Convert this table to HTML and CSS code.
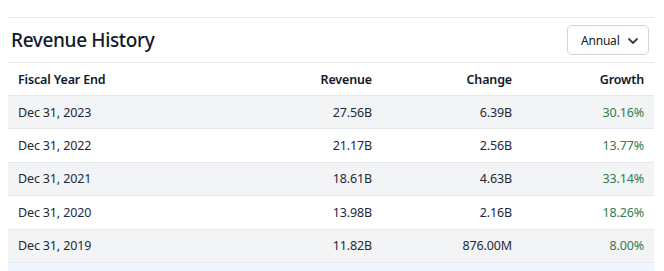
FILE: index.html
```html
<!DOCTYPE html>
<html lang="en">
<head>
    <meta charset="UTF-8">
    <meta name="viewport" content="width=device-width, initial-scale=1.0">
    <title>Revenue History</title>
    <link rel="stylesheet" href="styles.css">
</head>
<body>
<div class="panel">
    <!-- Header -->
    <div class="panel-head">
        <h2 class="title">Revenue History</h2>
        <button class="period-btn">
            <span>Annual</span>
            <svg class="chevron" width="10" height="6" viewBox="0 0 10 6">
                <path d="M1 1l4 4 4-4" fill="none" stroke="#374151" stroke-width="1.8" stroke-linecap="round" stroke-linejoin="round"/>
            </svg>
        </button>
    </div>

    <!-- Table -->
    <div class="table">
        <div class="row head">
            <div class="cell">Fiscal Year End</div>
            <div class="cell num">Revenue</div>
            <div class="cell num">Change</div>
            <div class="cell num">Growth</div>
        </div>
        <div class="row alt">
            <div class="cell">Dec 31, 2023</div>
            <div class="cell num">27.56B</div>
            <div class="cell num">6.39B</div>
            <div class="cell num up">30.16%</div>
        </div>
        <div class="row">
            <div class="cell">Dec 31, 2022</div>
            <div class="cell num">21.17B</div>
            <div class="cell num">2.56B</div>
            <div class="cell num up">13.77%</div>
        </div>
        <div class="row alt">
            <div class="cell">Dec 31, 2021</div>
            <div class="cell num">18.61B</div>
            <div class="cell num">4.63B</div>
            <div class="cell num up">33.14%</div>
        </div>
        <div class="row">
            <div class="cell">Dec 31, 2020</div>
            <div class="cell num">13.98B</div>
            <div class="cell num">2.16B</div>
            <div class="cell num up">18.26%</div>
        </div>
        <div class="row alt">
            <div class="cell">Dec 31, 2019</div>
            <div class="cell num">11.82B</div>
            <div class="cell num">876.00M</div>
            <div class="cell num up">8.00%</div>
        </div>
        <!-- next row, only its top edge shows -->
        <div class="row hover"></div>
    </div>
</div>
</body>
</html>
```

FILE: styles.css
```css
/* Global styles */
* {
    margin: 0;
    padding: 0;
    box-sizing: border-box;
}

html {
    overflow: hidden;
}

body {
    font-family: "Noto Sans", "Open Sans", Arial, sans-serif;
    background-color: white;
    color: #1f2937;
    padding: 17px 10px 0 8px;
}

.panel {
    border-top: 1px solid #e5e7eb;
}

/* Header */
.panel-head {
    display: flex;
    justify-content: space-between;
    align-items: center;
    height: 45px;
    border-bottom: 1px solid #e5e7eb;
    padding: 0 5px 0 3px;
}

.title {
    font-size: 19px;
    font-weight: 500;
    color: #111827;
    letter-spacing: -0.35px;
}

.period-btn {
    display: flex;
    justify-content: space-between;
    align-items: center;
    height: 30px;
    width: 82px;
    padding: 0 10px 0 13px;
    background-color: white;
    border: 1px solid #d1d5db;
    border-radius: 5px;
    font-family: inherit;
    font-size: 12px;
    letter-spacing: -0.2px;
    color: #111827;
    cursor: pointer;
}

.chevron {
    margin-top: 1px;
}

/* Table */
.row {
    display: grid;
    grid-template-columns: 1fr 140px 140px 132px;
    align-items: center;
    height: 33.4px;
    border-bottom: 1px solid #e5e7eb;
    font-size: 12.5px;
    letter-spacing: -0.15px;
}

.row.head {
    height: 33px;
    font-weight: 600;
    color: #111827;
}

.row.alt {
    background-color: #f3f4f6;
}

.row.hover {
    background-color: #eff6ff;
}

.cell {
    padding: 0 10px;
}

.cell.num {
    text-align: right;
}

.cell.up {
    color: #2f7d4f;
}
```
